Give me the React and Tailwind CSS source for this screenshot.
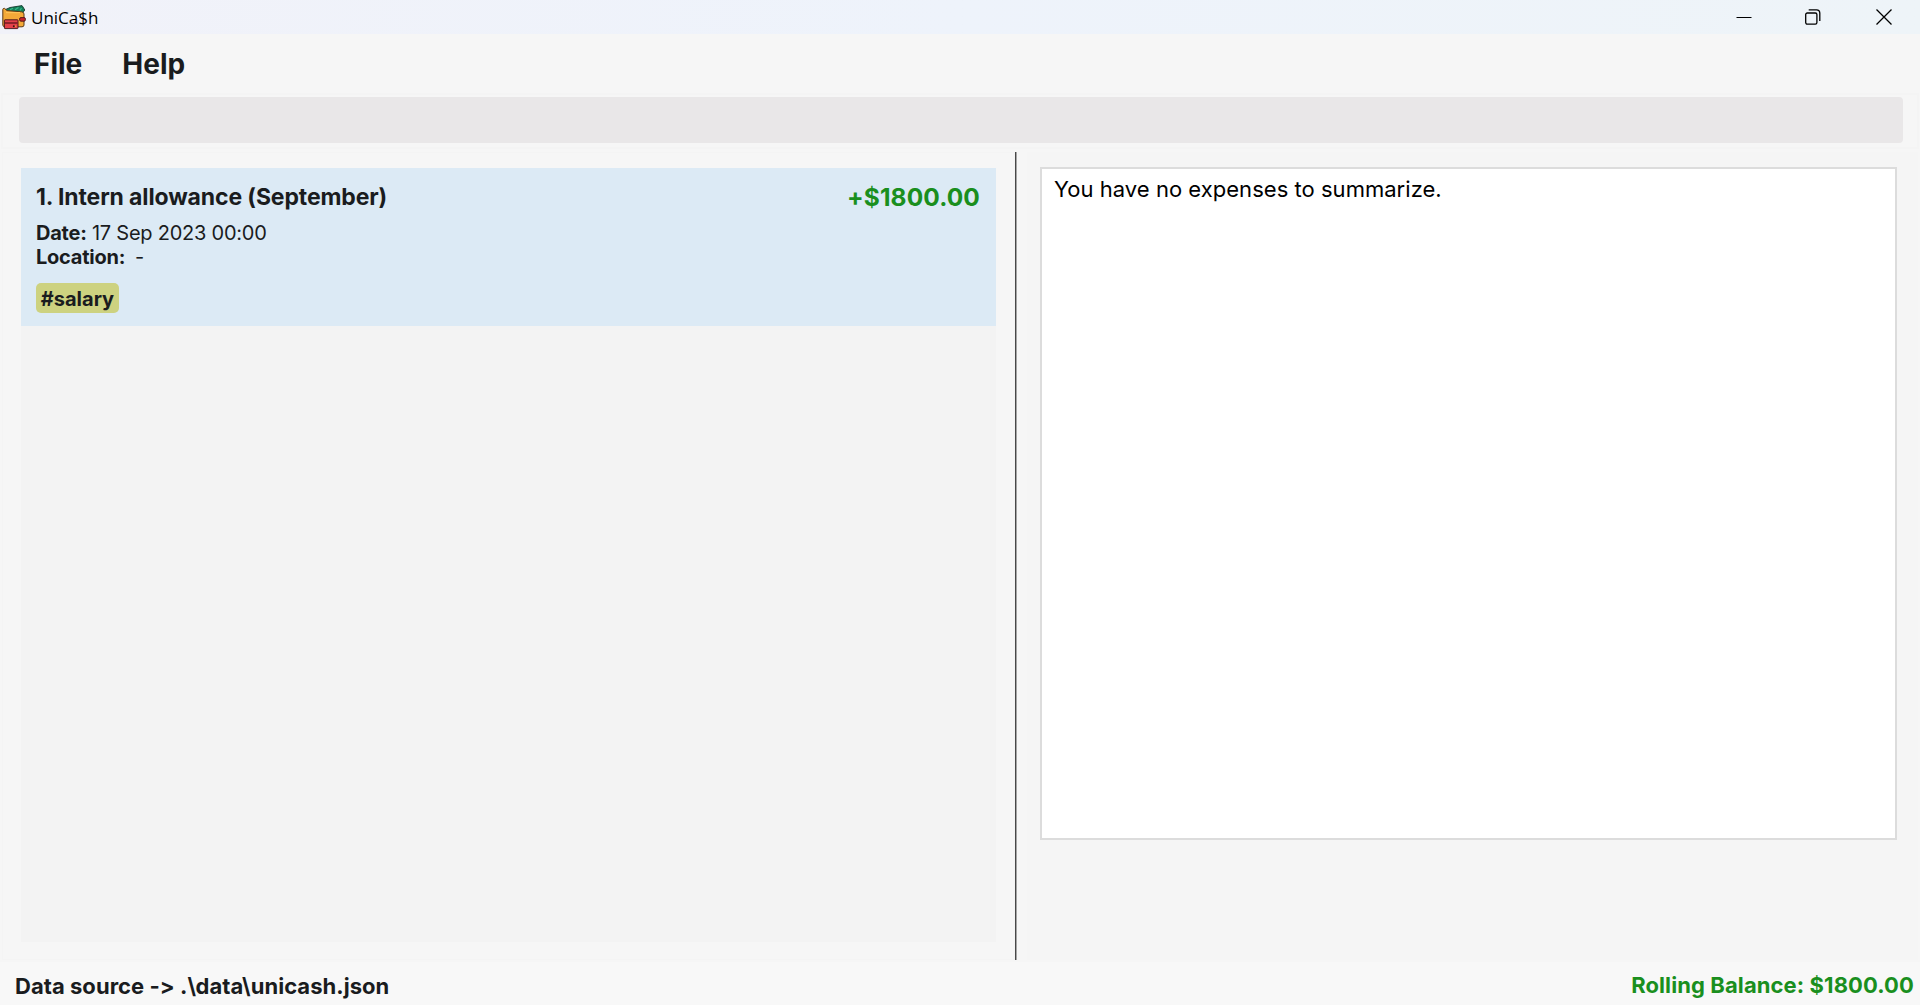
function WalletIcon() {
  return (
    <svg width="24" height="25" viewBox="0 0 24 25" className="block shrink-0">
      <path d="M2.5 5 L8 2.5 L20 0.6 L21 2 L22.8 5 L20.5 8 L4 8 Z" fill="#12805a" stroke="#17392f" strokeWidth="0.9" />
      <path d="M8 4.8 L11 3.2 M13 4.8 L16.5 2.4 M18 5.4 L19.5 3" stroke="#37b887" strokeWidth="1.2" />
      <path d="M0.8 4.5 Q0.8 3.2 2.6 3.4 L5 5.6 L19.5 6.8 Q22 7 22 9 L22 20 Q22 21.8 20 21.8 L3 21.8 Q0.8 21.8 0.8 20 Z" fill="#f4a938" stroke="#5a3818" strokeWidth="1" />
      <path d="M4 7.6 H18" stroke="#ffc257" strokeWidth="1.2" />
      <rect x="17.6" y="12.6" width="5.8" height="3.6" rx="1.4" fill="#c5202f" stroke="#4a1418" strokeWidth="0.9" />
      <rect x="2.4" y="14.8" width="13.6" height="8.8" rx="0.6" fill="#e4404a" stroke="#3d1216" strokeWidth="0.9" />
      <path d="M2.8 18 H15.6" stroke="#6b1820" strokeWidth="1.4" />
      <circle cx="11.8" cy="21.3" r="1" fill="#3d1216" />
      <circle cx="13.6" cy="21.3" r="0.8" fill="#f2a434" />
    </svg>
  );
}

function TitleBar() {
  return (
    <header className="flex h-[34px] items-center justify-between bg-linear-to-r from-[#f1f2f9] via-[#eef3fb] to-[#eef4f8] pl-[2px] pr-[28px]">
      <div className="flex items-center gap-[5px]">
        <WalletIcon />
        <span className="pt-[1px] font-['Open_Sans',sans-serif] text-[17px] leading-6 text-black">UniCa$h</span>
      </div>
      <div className="flex items-center text-black">
        <svg width="16" height="16" viewBox="0 0 16 16"><path d="M0.5 8.5H15.5" stroke="currentColor" /></svg>
        <svg className="ml-[53px]" width="16" height="16" viewBox="0 0 16 16" fill="none" stroke="currentColor" strokeWidth="1.3">
          <rect x="0.7" y="4" width="11.2" height="11.2" rx="1.6" />
          <path d="M3.7 0.8H11.5Q14.8 0.8 14.8 4.1V12" />
        </svg>
        <svg className="ml-[55px]" width="16" height="16" viewBox="0 0 16 16"><path d="M0.5 0.5L15.5 15.5M15.5 0.5L0.5 15.5" stroke="currentColor" strokeWidth="1.3" /></svg>
      </div>
    </header>
  );
}

function TransactionCard() {
  return (
    <article className="h-[158px] bg-[#dceaf5] pl-[15px] pr-[16px] pt-[14px]">
      <div className="flex items-center justify-between font-bold leading-[30px]">
        <h2 className="text-[23px] tracking-[-0.12px]">1. Intern allowance (September)</h2>
        <span className="text-[24.5px] tracking-[0.1px] text-[#1a8f1e]">+$1800.00</span>
      </div>
      <div className="mt-[9px] text-[20px] leading-6 tracking-[-0.24px]">
        <p><b>Date:</b> 17 Sep 2023 00:00</p>
        <p><b>Location:</b>&nbsp; <span className="-ml-[1px]">-</span></p>
      </div>
      <span className="mt-[14px] flex h-[30px] w-[83px] items-center justify-center rounded-[5px] bg-[#cdd280] pt-[2px] text-[20px] font-bold">#salary</span>
    </article>
  );
}

export default function App() {
  return (
    <div className="flex h-[1005px] w-[1920px] flex-col overflow-hidden bg-[#f6f6f6] font-['Inter',sans-serif] text-[#1a1c1e] [font-feature-settings:'calt'_0]">
      <TitleBar />
      <nav className="flex h-[59px] items-start gap-[40px] pl-[34px] pt-[13px] text-[28px] font-bold leading-[34px]">
        <span>File</span>
        <span>Help</span>
      </nav>
      <div className="mx-[1px] flex h-[56px] shrink-0 border-2 border-[#f4f4f4] pl-4 pr-[14px] pt-[2px]">
        <div className="h-[46px] w-full rounded-[4px] bg-[#e9e7e8]" />
      </div>
      <main className="mt-[3px] flex h-[810px] shrink-0">
        <section className="ml-[2px] h-[808px] w-[1013px] border border-[#f4f4f4] pl-[18px] pt-[15px]">
          <div className="h-[774px] w-[975px] bg-[#f3f3f3]">
            <TransactionCard />
          </div>
        </section>
        <div className="h-[808px] w-[2px] border-l border-[#484848] bg-[#a5a5a5]" />
        <section className="ml-[10px] h-[808px] w-[891px] bg-[#f5f5f5] pl-[13px] pt-[15px]">
          <div className="h-[673px] w-[857px] border-2 border-[#dcdcdc] bg-white pl-[12px] pt-[5px] text-[22px] leading-[30px] tracking-[0.03px] text-black">
            You have no expenses to summarize.
          </div>
        </section>
      </main>
      <footer className="flex flex-1 items-center justify-between bg-[#f8f8f8] pl-[15px] pr-[6px] pt-[5px] text-[22px] font-bold">
        <span className="tracking-[0.04px]">Data source -&gt; .\data\unicash.json</span>
        <span className="pb-[2px] tracking-[0.1px] text-[#1a8f1e]">Rolling Balance: $1800.00</span>
      </footer>
    </div>
  );
}
